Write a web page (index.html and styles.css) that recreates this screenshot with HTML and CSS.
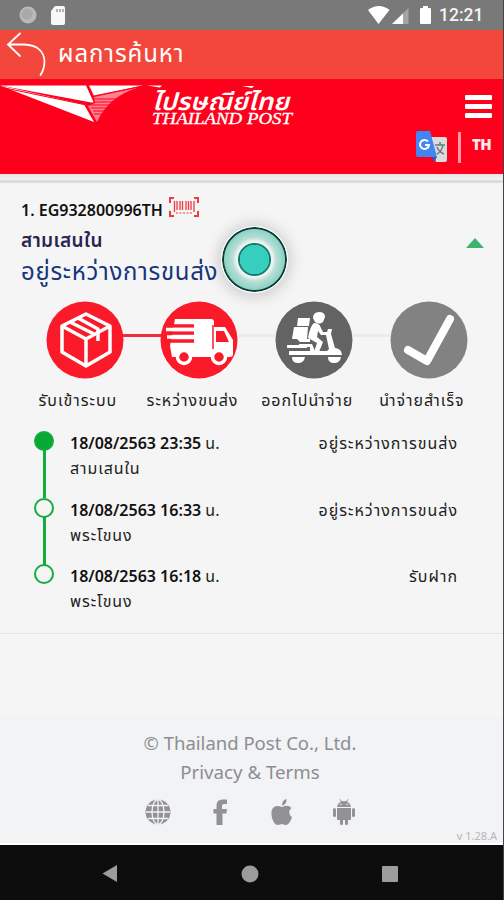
FILE: index.html
```html
<!DOCTYPE html>
<html lang="th">
  <head>
    <meta charset="UTF-8" />
    <meta name="viewport" content="width=device-width, initial-scale=1.0" />
    <title>ผลการค้นหา</title>
    <link rel="stylesheet" href="styles.css">
  </head>

  <body>
    <div class="statusbar">
      <svg class="status-left" width="50" height="22" viewBox="0 0 50 22">
        <circle cx="9" cy="11" r="8.500" fill="#b9b9b9" />
        <circle cx="8" cy="10" r="5.500" fill="#a9a9a9" />
        <path d="M36 2h8q2 0 2 2v15q0 2-2 2H34q-2 0-2-2V7z" fill="#f8f8f8" />
        <path d="M38 5v3M41 5v3M44 5v3" stroke="#999" stroke-width="1.500" />
      </svg>
      <svg class="status-right" width="66" height="22" viewBox="0 0 66 22">
        <path d="M1 6Q12-2 22.500 6L11.500 20z" fill="#fff" />
        <path d="M41.500 4v16H25z" fill="#a5a5a5" />
        <path d="M36 9.500V20H25z" fill="#fff" />
        <path d="M56 2h5v2h2q1 0 1 1v14q0 1-1 1h-9q-1 0-1-1V5q0-1 1-1h2z" fill="#fff" />
      </svg>
      <span class="clock">12:21</span>
    </div>

    <div class="appbar">
      <svg class="back" width="50" height="49" viewBox="0 0 50 49" fill="none" stroke="#fff" stroke-width="1.800" stroke-linecap="round">
        <path d="M20 3.500L8 14.500l12 11.500M8.500 14.500H24C38 15 44 22 44.500 31Q44.500 39 40.500 45" />
      </svg>
      <h1>ผลการค้นหา</h1>
    </div>

    <header>
      <svg class="logo" width="300" height="60" viewBox="0 0 300 60">
        <path d="M0 6.500L84 25.500 94 43z" fill="#fff" />
        <path d="M0 6.500H86L94 24z" fill="#fff" />
        <path d="M89 6.500H143L94 17z" fill="#fff" />
        <path d="M94 18L138 8.500Q108 18 97 43L88 27l7-3z" fill="#ff8090" />
        <path d="M0 8L84 25.500 94 24M94 17l49-10" stroke="#ff001c" stroke-width="1.200" fill="none" />
        <path d="M94 20h26M93 23h21M90 26h20M91 29h16M93 32h12M94 35h9" stroke="#ff001c" stroke-width="1" />
        <path d="M147 6.500h15l-2 2zM242 7h12l-2 2z" fill="#fff" />
        <text class="logo-th" x="152" y="31" textLength="137" lengthAdjust="spacingAndGlyphs">ไปรษณีย์ไทย</text>
        <text class="logo-en" x="152" y="45" textLength="140" lengthAdjust="spacingAndGlyphs">THAILAND POST</text>
      </svg>
      <div class="tools">
        <div class="burger"><i></i><i></i><i></i></div>
        <div class="lang">
          <svg width="32" height="32" viewBox="0 0 32 32">
            <path d="M14 6h15q2 0 2 2v21q0 2-2 2H20z" fill="#dcdcdc" />
            <path d="M19 14h10M24 11v3M27 14q-1 6-6 9M21 16q2 5 7 7" fill="none" stroke="#6b7a80" stroke-width="1.500" />
            <path d="M2 0h12l7 26H2q-2 0-2-2V2q0-2 2-2z" fill="#4285f4" />
            <path d="M16 26h5l-3 5z" fill="#2a56c6" />
            <path d="M12 10.500A4.500 4.500 0 1 0 13 14H9" fill="none" stroke="#fff" stroke-width="2" />
          </svg>
          <span class="bar"></span>
          <b>TH</b>
        </div>
      </div>
    </header>
    <div class="strip"></div>

    <main>
      <section class="parcel">
        <div class="parcel-info">
          <p class="code"><span>1. EG932800996TH</span>
            <svg width="30" height="20" viewBox="0 0 30 20" fill="none" stroke="#f03a44" stroke-width="2">
              <path d="M1 6V1h4M25 1h4v5M29 14v5h-4M5 19H1v-5" />
              <path d="M5.500 4v11M8 4v9M11 4v9M13.500 4v9M17 4v9M19.500 4v9M22 4v9M25 4v11" stroke-width="1.300" />
              <path d="M7 16h16" stroke-dasharray="2 1.500" stroke-width="1" />
            </svg>
          </p>
          <p class="place">สามเสนใน</p>
          <p class="state">อยู่ระหว่างการขนส่ง</p>
        </div>
        <span class="caret"></span>
        <span class="touch"></span>
      </section>

      <ul class="steps">
        <li class="done">
          <svg width="78" height="78" viewBox="0 0 78 78">
            <circle cx="39" cy="39" r="38.500" fill="#fb1a2a" />
            <g fill="none" stroke="#fff" stroke-width="3.500" stroke-linejoin="round">
              <path d="M40 13L64 25V51L40 65 16 51V25zM16 25L40 38 64 25M40 38V65" />
              <path d="M24 21L48 33M32 17L52 28V40" />
            </g>
          </svg>
          <p>รับเข้าระบบ</p>
        </li>
        <li>
          <svg width="78" height="78" viewBox="0 0 78 78">
            <circle cx="39" cy="39" r="38.500" fill="#fb1a2a" />
            <path d="M15 18H51Q54 18 54 21V26H65L73 39V53Q73 56 70 56H12Q11 50 10 45z" fill="#fff" />
            <path d="M4 25h30M4 32h30M4 40h30" stroke="#fb1a2a" stroke-width="3.500" />
            <path d="M6 28.500h28M7 36h27" stroke="#fff" stroke-width="3.500" />
            <path d="M58 30H64L69 41H56V30" fill="#fb1a2a" />
            <path d="M53 24V48" stroke="#fb1a2a" stroke-width="1.500" />
            <g fill="#fb1a2a" stroke="#fff" stroke-width="3.500">
              <circle cx="24" cy="56" r="6.500" />
              <circle cx="59" cy="56" r="6.500" />
            </g>
          </svg>
          <p>ระหว่างขนส่ง</p>
        </li>
        <li>
          <svg width="78" height="78" viewBox="0 0 78 78">
            <circle cx="39" cy="39" r="38.500" fill="#636363" />
            <g fill="#fff">
              <path d="M23 17h12l-1 8H22zM19 26h14l-1 12H17z" />
              <path d="M38 17q0-6 6-6t6 5l-2 5q-4 3-8 0z" />
              <path d="M39 22q5 0 6 3l3 6 7 0v3h-9l-3-4-1 6 6 5-4 10h-5l3-9-9-5q2-12 6-15z" />
              <path d="M53 28h4l-1 5 4 14q7 1 7 7H14v-4h21V46H24v-3h13l3 7h12l2-2-3-14z" />
              <path d="M22 38h13v3H25zM12 44h20v3H12z" />
              <path d="M17 56h13q-1 6-7 6t-6-6zM53 56h13q-1 6-7 6t-6-6z" />
            </g>
          </svg>
          <p>ออกไปนำจ่าย</p>
        </li>
        <li>
          <svg width="78" height="78" viewBox="0 0 78 78">
            <circle cx="39" cy="39" r="38.500" fill="#828282" />
            <path d="M18 49L37 60 60 18" fill="none" stroke="#fff" stroke-width="8" stroke-linecap="round" stroke-linejoin="round" />
          </svg>
          <p>นำจ่ายสำเร็จ</p>
        </li>
      </ul>

      <ol class="timeline">
        <li class="now">
          <span class="dot"></span>
          <div class="when">
            <p><b>18/08/2563 23:35</b> น.</p>
            <p class="office">สามเสนใน</p>
          </div>
          <p class="what">อยู่ระหว่างการขนส่ง</p>
        </li>
        <li>
          <span class="dot"></span>
          <div class="when">
            <p><b>18/08/2563 16:33</b> น.</p>
            <p class="office">พระโขนง</p>
          </div>
          <p class="what">อยู่ระหว่างการขนส่ง</p>
        </li>
        <li>
          <span class="dot"></span>
          <div class="when">
            <p><b>18/08/2563 16:18</b> น.</p>
            <p class="office">พระโขนง</p>
          </div>
          <p class="what">รับฝาก</p>
        </li>
      </ol>
    </main>

    <footer>
      <p class="owner">© Thailand Post Co., Ltd.</p>
      <p>Privacy &amp; Terms</p>
      <div class="social">
        <svg width="26" height="26" viewBox="0 0 26 26">
          <circle cx="13" cy="13" r="12.500" fill="#929295" />
          <path d="M13 0v26M1 13h24M3 6.500h20M3 19.500h20" stroke="#f1f3f5" stroke-width="1.300" />
          <ellipse cx="13" cy="13" rx="6" ry="12.500" fill="none" stroke="#f1f3f5" stroke-width="1.300" />
        </svg>
        <svg width="26" height="26" viewBox="0 0 26 26">
          <path d="M20 .5V5h-3q-2 0-2 2v3h5l-.6 4.500H15.500V26h-6V14.500H6.500V10H9.500V6.500Q9.500.5 15.500.5z" fill="#929295" />
        </svg>
        <svg width="26" height="26" viewBox="0 0 26 26" fill="#929295">
          <path d="M13 6.500Q13 1 17.500 0q.500 5.500-4.500 6.500z" />
          <path d="M13 8q6-3 9.500 1-5 4 .5 9.500-3 7.500-6 7.500-1.500 0-4-1-3 1-4.500 1-3.500 0-5.500-7Q1 11 5 8q3-2 8 0z" />
        </svg>
        <svg width="26" height="26" viewBox="0 0 26 26" fill="#929295">
          <path d="M6 8q1-4 4-5.500L8.500.5l.5-.5 2 2.200q2-.6 4 0L17 0l.500.500L16 2.500Q19 4 20 8z" />
          <path d="M6 9h14v11q0 1-1 1h-2v4q0 1-1.500 1T14 25v-4h-2v4q0 1-1.500 1T9 25v-4H7q-1 0-1-1z" />
          <rect x="2" y="9" width="3" height="9" rx="1.500" />
          <rect x="21" y="9" width="3" height="9" rx="1.500" />
          <circle cx="10" cy="5.500" r=".8" fill="#f1f3f5" />
          <circle cx="16" cy="5.500" r=".8" fill="#f1f3f5" />
        </svg>
      </div>
      <small>v 1.28.A</small>
    </footer>

    <nav>
      <svg width="18" height="20" viewBox="0 0 18 20"><path d="M16 1v17L1.500 9.500z" fill="#9c9c9c" /></svg>
      <svg width="18" height="20" viewBox="0 0 18 20"><circle cx="9" cy="10" r="8.500" fill="#9c9c9c" /></svg>
      <svg width="18" height="20" viewBox="0 0 18 20"><rect x="1" y="2" width="16" height="16" rx="1" fill="#9c9c9c" /></svg>
    </nav>
  </body>
</html>
```
FILE: styles.css
```css
* {
  box-sizing: border-box;
  margin: 0;
  padding: 0;
}
body {
  width: 504px;
  height: 900px;
  overflow: hidden;
  position: relative;
  background-color: #f5f5f5;
  font-family: "Noto Sans Thai", "Noto Sans", sans-serif;
  color: #222;
}
/* dark edge of the screen */
body::after {
  content: "";
  position: absolute;
  top: 0;
  right: 0;
  width: 1px;
  height: 900px;
  background-color: #444;
}
svg {
  display: block;
}
p, h1, b, small, .clock, .code span {
  white-space: nowrap;
}
ul, ol {
  list-style: none;
}
.statusbar {
  display: flex;
  align-items: center;
  height: 30px;
  padding: 0 20px 0 19px;
  background-color: #797979;
}
.status-right {
  margin-left: auto;
}
.clock {
  margin-left: 6px;
  width: 45px;
  font: 500 17.500px/32px Roboto, sans-serif;
  color: #f4f4f4;
}
.appbar {
  display: flex;
  height: 49px;
  background-color: #f4473c;
}
.appbar h1 {
  margin-left: 8px;
  font-size: 24px;
  font-weight: 400;
  letter-spacing: .9px;
  line-height: 51px;
  color: #fff;
}
header {
  display: flex;
  justify-content: space-between;
  height: 95px;
  padding-right: 12px;
  background-color: #ff001c;
}
.logo-th {
  font: italic 600 24px "Noto Sans Thai", "Noto Sans", sans-serif;
  fill: #fff;
}
.logo-en {
  font: italic 16px "Liberation Serif", serif;
  fill: #fff;
  stroke: #fff;
  stroke-width: .3px;
}
.tools {
  display: flex;
  flex-direction: column;
  align-items: flex-end;
}
.burger {
  display: flex;
  flex-direction: column;
  gap: 4px;
  margin-top: 16px;
}
.burger i {
  width: 27px;
  height: 5px;
  border-radius: 1px;
  background-color: #fff;
}
.lang {
  display: flex;
  align-items: center;
  margin-top: 13px;
}
.lang .bar {
  width: 3px;
  height: 31px;
  margin: 0 11px 0 10px;
  background-color: #ff9aa6;
}
.lang b {
  width: 20px;
  font: 800 15px/26px "Open Sans", sans-serif;
  letter-spacing: -.5px;
  align-self: flex-start;
  color: #ffe8ea;
}
.strip {
  height: 10px;
  background: linear-gradient(#e6e6e6, #f2f2f2 60%, #dcdcdc 61%, #dcdcdc 85%, #f5f5f5 86%);
}
main {
  height: 532px;
}
.parcel {
  display: flex;
  justify-content: space-between;
  position: relative;
  height: 117px;
  padding: 12px 20px 0 21px;
}
.code {
  display: flex;
  gap: 3px;
  height: 30px;
  font-size: 16px;
  font-weight: 600;
  line-height: 31px;
  color: #111;
}
.code span {
  width: 145px;
}
.code svg {
  margin-top: 1px;
}
.place {
  font-size: 19px;
  font-weight: 600;
  letter-spacing: .4px;
  line-height: 32px;
  color: #2b2350;
}
.state {
  font-size: 24px;
  letter-spacing: .7px;
  line-height: 31px;
  color: #16357c;
}
.caret {
  align-self: flex-start;
  margin-top: 42px;
  border: 9px solid transparent;
  border-top: 0;
  border-bottom: 10px solid #3cb371;
}
.touch {
  position: absolute;
  left: 221px;
  top: 42px;
  width: 67px;
  height: 67px;
  border: 1px solid #fff;
  border-radius: 50%;
  background: radial-gradient(circle, #36cfbd 0 14.500px, #177a6d 15px 16px, #eef5f3 17px 18px, #b9ddd5 22px, #8bd3c5 30px, #0d3d37 31px 32px, #fff 33px);
  box-shadow: 0 1px 14px 4px #00000026;
}
.steps {
  display: grid;
  grid-template-columns: repeat(4, 114.700px);
  padding-left: 20.500px;
  height: 124px;
}
.steps li {
  position: relative;
}
.steps svg {
  position: relative;
  margin-left: 25px;
}
/* connector to the next step */
.steps li:not(:last-child)::before {
  content: "";
  position: absolute;
  left: 101px;
  top: 33px;
  width: 41px;
  height: 3px;
  background-color: #ebebeb;
}
.steps li.done::before {
  background-color: #ee2e3c;
}
.steps p {
  font-size: 16px;
  letter-spacing: 1px;
  line-height: 44px;
  text-align: center;
}
.timeline {
  height: 209px;
  padding: 5px 47px 0 34px;
  border-bottom: 1px solid #e4e4e4;
}
.timeline li {
  display: flex;
  position: relative;
  height: 66.500px;
  font-size: 16px;
  line-height: 25px;
}
.timeline li:not(:last-child)::before {
  content: "";
  position: absolute;
  left: 9px;
  top: 20px;
  width: 3px;
  height: 48px;
  background-color: #12ad3c;
}
.dot {
  width: 20px;
  height: 20px;
  margin-top: 1px;
  border: 2px solid #12ad3c;
  border-radius: 50%;
}
.now .dot {
  background-color: #06a935;
}
.when {
  margin: 2px 0 0 16px;
}
.when b {
  font-weight: 600;
  color: #111;
}
.office {
  letter-spacing: .9px;
}
.what {
  margin: 2px -1px 0 auto;
  letter-spacing: 1px;
}
footer {
  position: relative;
  height: 129px;
  padding-top: 14px;
  padding-right: 4px;
  background-color: #f1f3f5;
  border-bottom: 2px solid #fff;
  text-align: center;
  font-size: 18.700px;
  line-height: 29px;
  color: #8d8d90;
}
.owner {
  font-size: 18.500px;
}
.social {
  display: flex;
  justify-content: center;
  gap: 36px;
  margin-top: 11px;
  padding-left: 1px;
}
footer small {
  position: absolute;
  right: 7px;
  bottom: -2px;
  font-size: 11px;
  line-height: 16px;
  color: #b5b7b9;
}
nav {
  display: flex;
  justify-content: center;
  align-items: center;
  gap: 122px;
  height: 55px;
  padding: 2px 5px 0 0;
  background-color: #0d0d0d;
}
```
